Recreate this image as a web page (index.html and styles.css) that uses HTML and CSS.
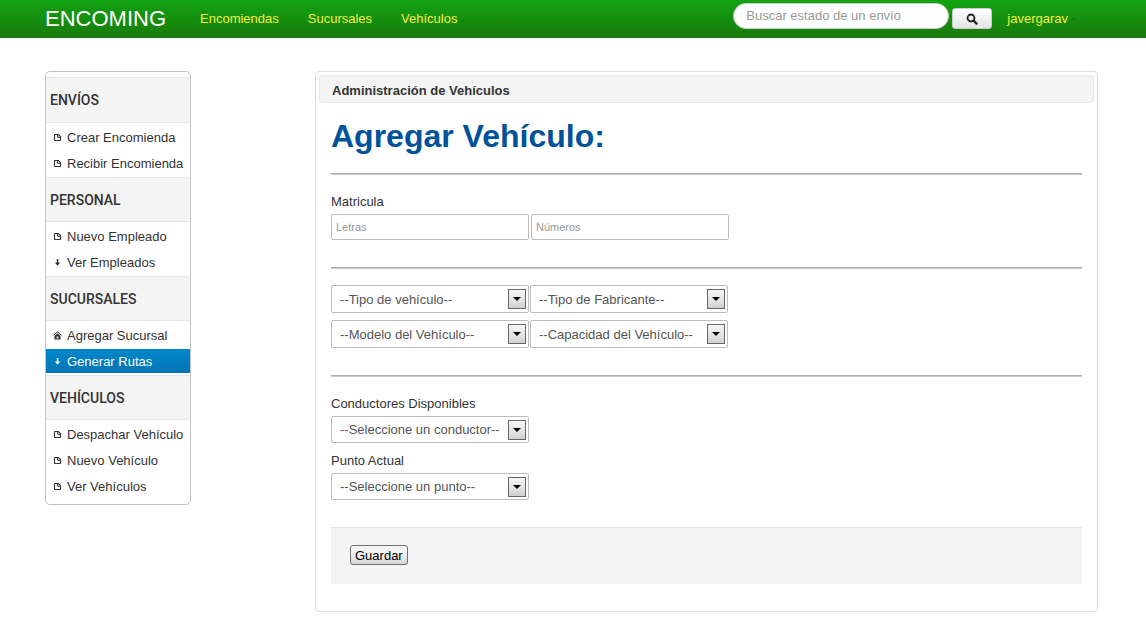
FILE: index.html
```html
<!DOCTYPE html>
<html lang="es">
<head>
<meta charset="utf-8">
<title>Encoming - Administración de Vehículos</title>
<link rel="stylesheet" href="styles.css">
</head>
<body>
<svg class="sprite" aria-hidden="true">
  <symbol id="i-file" viewBox="0 0 9 9"><path d="M2 1.5h3.4l2.1 2.1V7q0 .5-.5.5H2q-.5 0-.5-.5V2q0-.5.5-.5z" fill="none" stroke="currentColor" stroke-width="1.1"/><path d="M4.6 1.3v3h3" fill="none" stroke="currentColor"/></symbol>
  <symbol id="i-down" viewBox="0 0 9 9"><path d="M3.8 1h1.5v3.6h1.9L4.5 7.7 1.9 4.6h1.9z" fill="currentColor"/></symbol>
  <symbol id="i-home" viewBox="0 0 9 9"><path d="M.5 4.3 4.5 1l4 3.3" fill="none" stroke="currentColor"/><path fill-rule="evenodd" d="M1.5 4.7 4.5 2.4l3 2.3v3.8h-6zM3.7 5.6v2h1.6v-2z" fill="currentColor"/></symbol>
  <symbol id="i-drop" viewBox="0 0 18 20"><rect x=".5" y=".5" width="17" height="19" fill="url(#drop-fill)" stroke="#666"/><path d="M5 8h8l-4 4z" fill="#000"/></symbol>
  <linearGradient id="drop-fill" x1="0" y1="0" x2="0" y2="1"><stop offset="0" stop-color="#f6f6f6"/><stop offset=".5" stop-color="#e6e6e6"/><stop offset="1" stop-color="#cfcfcf"/></linearGradient>
</svg>
<header class="navbar">
  <a class="brand" href="#">ENCOMING</a>
  <nav class="nav">
    <a href="#">Encomiendas</a>
    <a href="#">Sucursales</a>
    <a href="#">Vehículos</a>
  </nav>
  <form class="search">
    <input class="search-input" type="search" placeholder="Buscar estado de un envío" aria-label="Buscar estado de un envío">
    <button class="search-button" type="button" aria-label="Buscar"><svg width="12" height="12" viewBox="0 0 12 12"><circle cx="5" cy="5" r="3.5" fill="none" stroke="#222" stroke-width="1.8"/><path d="m7.6 7.6 3 3" stroke="#222" stroke-width="2.2" stroke-linecap="round"/></svg></button>
  </form>
  <a class="user" href="#">javergarav<span class="caret"></span></a>
</header>
<div class="layout">
  <nav class="sidebar">
    <h2 class="side-title">ENVÍOS</h2>
    <ul class="side-list">
      <li><a href="#"><svg class="icon"><use href="#i-file"/></svg>Crear Encomienda</a></li>
      <li><a href="#"><svg class="icon"><use href="#i-file"/></svg>Recibir Encomienda</a></li>
    </ul>
    <h2 class="side-title">PERSONAL</h2>
    <ul class="side-list">
      <li><a href="#"><svg class="icon"><use href="#i-file"/></svg>Nuevo Empleado</a></li>
      <li><a href="#"><svg class="icon"><use href="#i-down"/></svg>Ver Empleados</a></li>
    </ul>
    <h2 class="side-title">SUCURSALES</h2>
    <ul class="side-list">
      <li><a href="#"><svg class="icon"><use href="#i-home"/></svg>Agregar Sucursal</a></li>
      <li><a class="active" href="#"><svg class="icon"><use href="#i-down"/></svg>Generar Rutas</a></li>
    </ul>
    <h2 class="side-title">VEHÍCULOS</h2>
    <ul class="side-list">
      <li><a href="#"><svg class="icon"><use href="#i-file"/></svg>Despachar Vehículo</a></li>
      <li><a href="#"><svg class="icon"><use href="#i-file"/></svg>Nuevo Vehículo</a></li>
      <li><a href="#"><svg class="icon"><use href="#i-file"/></svg>Ver Vehículos</a></li>
    </ul>
  </nav>
  <main class="panel">
    <div class="panel-title">Administración de Vehículos</div>
    <form class="form">
      <h1 class="title">Agregar Vehículo:</h1>
      <hr class="rule">
      <label class="label" for="letras">Matricula</label>
      <div class="inputs">
        <input class="text" id="letras" type="text" placeholder="Letras">
        <input class="text" type="text" placeholder="Números" aria-label="Números">
      </div>
      <hr class="rule">
      <div class="selects">
        <div class="select"><select aria-label="Tipo de vehículo"><option>--Tipo de vehículo--</option></select><svg class="drop"><use href="#i-drop"/></svg></div>
        <div class="select"><select aria-label="Tipo de Fabricante"><option>--Tipo de Fabricante--</option></select><svg class="drop"><use href="#i-drop"/></svg></div>
        <div class="select"><select aria-label="Modelo del Vehículo"><option>--Modelo del Vehículo--</option></select><svg class="drop"><use href="#i-drop"/></svg></div>
        <div class="select"><select aria-label="Capacidad del Vehículo"><option>--Capacidad del Vehículo--</option></select><svg class="drop"><use href="#i-drop"/></svg></div>
      </div>
      <hr class="rule">
      <label class="label" for="conductor">Conductores Disponibles</label>
      <div class="select single"><select id="conductor"><option>--Seleccione un conductor--</option></select><svg class="drop"><use href="#i-drop"/></svg></div>
      <label class="label" for="punto">Punto Actual</label>
      <div class="select single"><select id="punto"><option>--Seleccione un punto--</option></select><svg class="drop"><use href="#i-drop"/></svg></div>
      <div class="actions"><button class="save" type="button">Guardar</button></div>
    </form>
  </main>
</div>
</body>
</html>
```
FILE: styles.css
```css
* { box-sizing: border-box; }
body {
  margin: 0;
  background: #fff;
  color: #333;
  font: 13px/18px "Liberation Sans", Arial, sans-serif;
}
a { color: inherit; text-decoration: none; }
input, select, button { font: inherit; margin: 0; }
.sprite { position: absolute; width: 0; height: 0; }

.navbar {
  display: flex;
  align-items: center;
  height: 38px;
  padding: 0 70px 0 45px;
  background: linear-gradient(#11a311, #1a7a0c);
  color: #f4ee3c;
}
.brand { color: #fff; font-size: 22px; margin-right: 34px; }
.nav { display: flex; gap: 29px; }
.search { display: flex; align-items: flex-start; gap: 3px; height: 38px; padding-top: 3px; margin: 0 15px 0 auto; }
.search-input {
  width: 216px;
  height: 26px;
  padding: 0 12px 2px;
  border: 1px solid #ccc;
  border-radius: 13px;
  background: #fff;
  appearance: none;
}
.search-input::placeholder { color: #999; opacity: 1; }
.search-button {
  display: flex;
  align-items: center;
  justify-content: center;
  width: 40px;
  height: 21px;
  margin-top: 5px;
  padding: 0;
  border: 1px solid #ccc;
  border-radius: 3px;
  background: linear-gradient(#fff, #e4e4e4);
}
.user { display: flex; align-items: center; gap: 4px; }
.caret { border: 2px solid transparent; border-top: 3px solid #23701f; border-bottom: 0; }

.layout { display: flex; align-items: flex-start; gap: 124px; padding: 33px 48px 15px 45px; }
.sidebar {
  flex: none;
  width: 146px;
  padding: 5px 0 4px;
  border: 1px solid #c4c4c4;
  border-radius: 5px;
}
.side-title {
  height: 45px;
  margin: 0;
  padding-left: 4px;
  border: solid #e6e6e6;
  border-width: 1px 0;
  background: #f4f4f4;
  font: 500 14px/45px Roboto, "Liberation Sans", sans-serif;
}
.side-title:first-child { height: 46px; }
.side-list { display: grid; gap: 2px; margin: 0; padding: 2px 0; list-style: none; }
.side-list a { display: flex; align-items: center; height: 24px; padding: 1px 0 0 7px; gap: 5px; }
.side-list .active { background: linear-gradient(#0088cc, #0075b3); color: #fff; }
.icon { width: 9px; height: 9px; }

.panel {
  flex: 1;
  min-width: 0;
  padding: 3px 3px 27px;
  border: 1px solid #ddd;
  border-radius: 4px;
}
.panel-title {
  height: 28px;
  padding-left: 12px;
  border: 1px solid #e8e8e8;
  border-radius: 3px;
  background: #f4f4f4;
  font-weight: bold;
  line-height: 29px;
}
.form { padding: 13px 12px 0; }
.title { margin: 0; color: #00539b; font-size: 32px; line-height: 40px; }
.rule { height: 2px; margin: 17px 0 16px; border: 0; background: linear-gradient(#aaa 50%, #ccc 50%); }
.label { display: block; height: 23px; line-height: 22px; }
.inputs { display: flex; gap: 2px; margin-bottom: 27px; }
.text {
  width: 198px;
  height: 26px;
  padding: 0 4px;
  border: 1px solid #bbb;
  border-radius: 2px;
  font-size: 11px;
}
.text::placeholder { color: #999; opacity: 1; }
.selects { display: grid; grid-template-columns: 198px 198px; gap: 7px 1px; margin-bottom: 27px; }
.select { display: grid; align-items: center; height: 28px; }
.select select, .drop { grid-area: 1 / 1; }
.select select {
  width: 100%;
  height: 100%;
  padding: 1px 24px 0 8px;
  border: 1px solid #bbb;
  border-radius: 2px;
  background: #fff;
  color: #555;
  appearance: none;
}
.drop { justify-self: end; width: 18px; height: 20px; margin-right: 3px; pointer-events: none; }
.single { width: 198px; height: 27px; margin-bottom: 7px; }
.actions { margin-top: 27px; padding: 17px 19px 19px; border-top: 1px solid #e2e2e2; background: #f4f4f4; }
.save {
  display: block;
  height: 20px;
  padding: 1px 4px 0;
  border: 1px solid #707070;
  border-radius: 3px;
  background: linear-gradient(#f4f4f4 45%, #d4d4d4);
  color: #000;
  line-height: 18px;
}
```
